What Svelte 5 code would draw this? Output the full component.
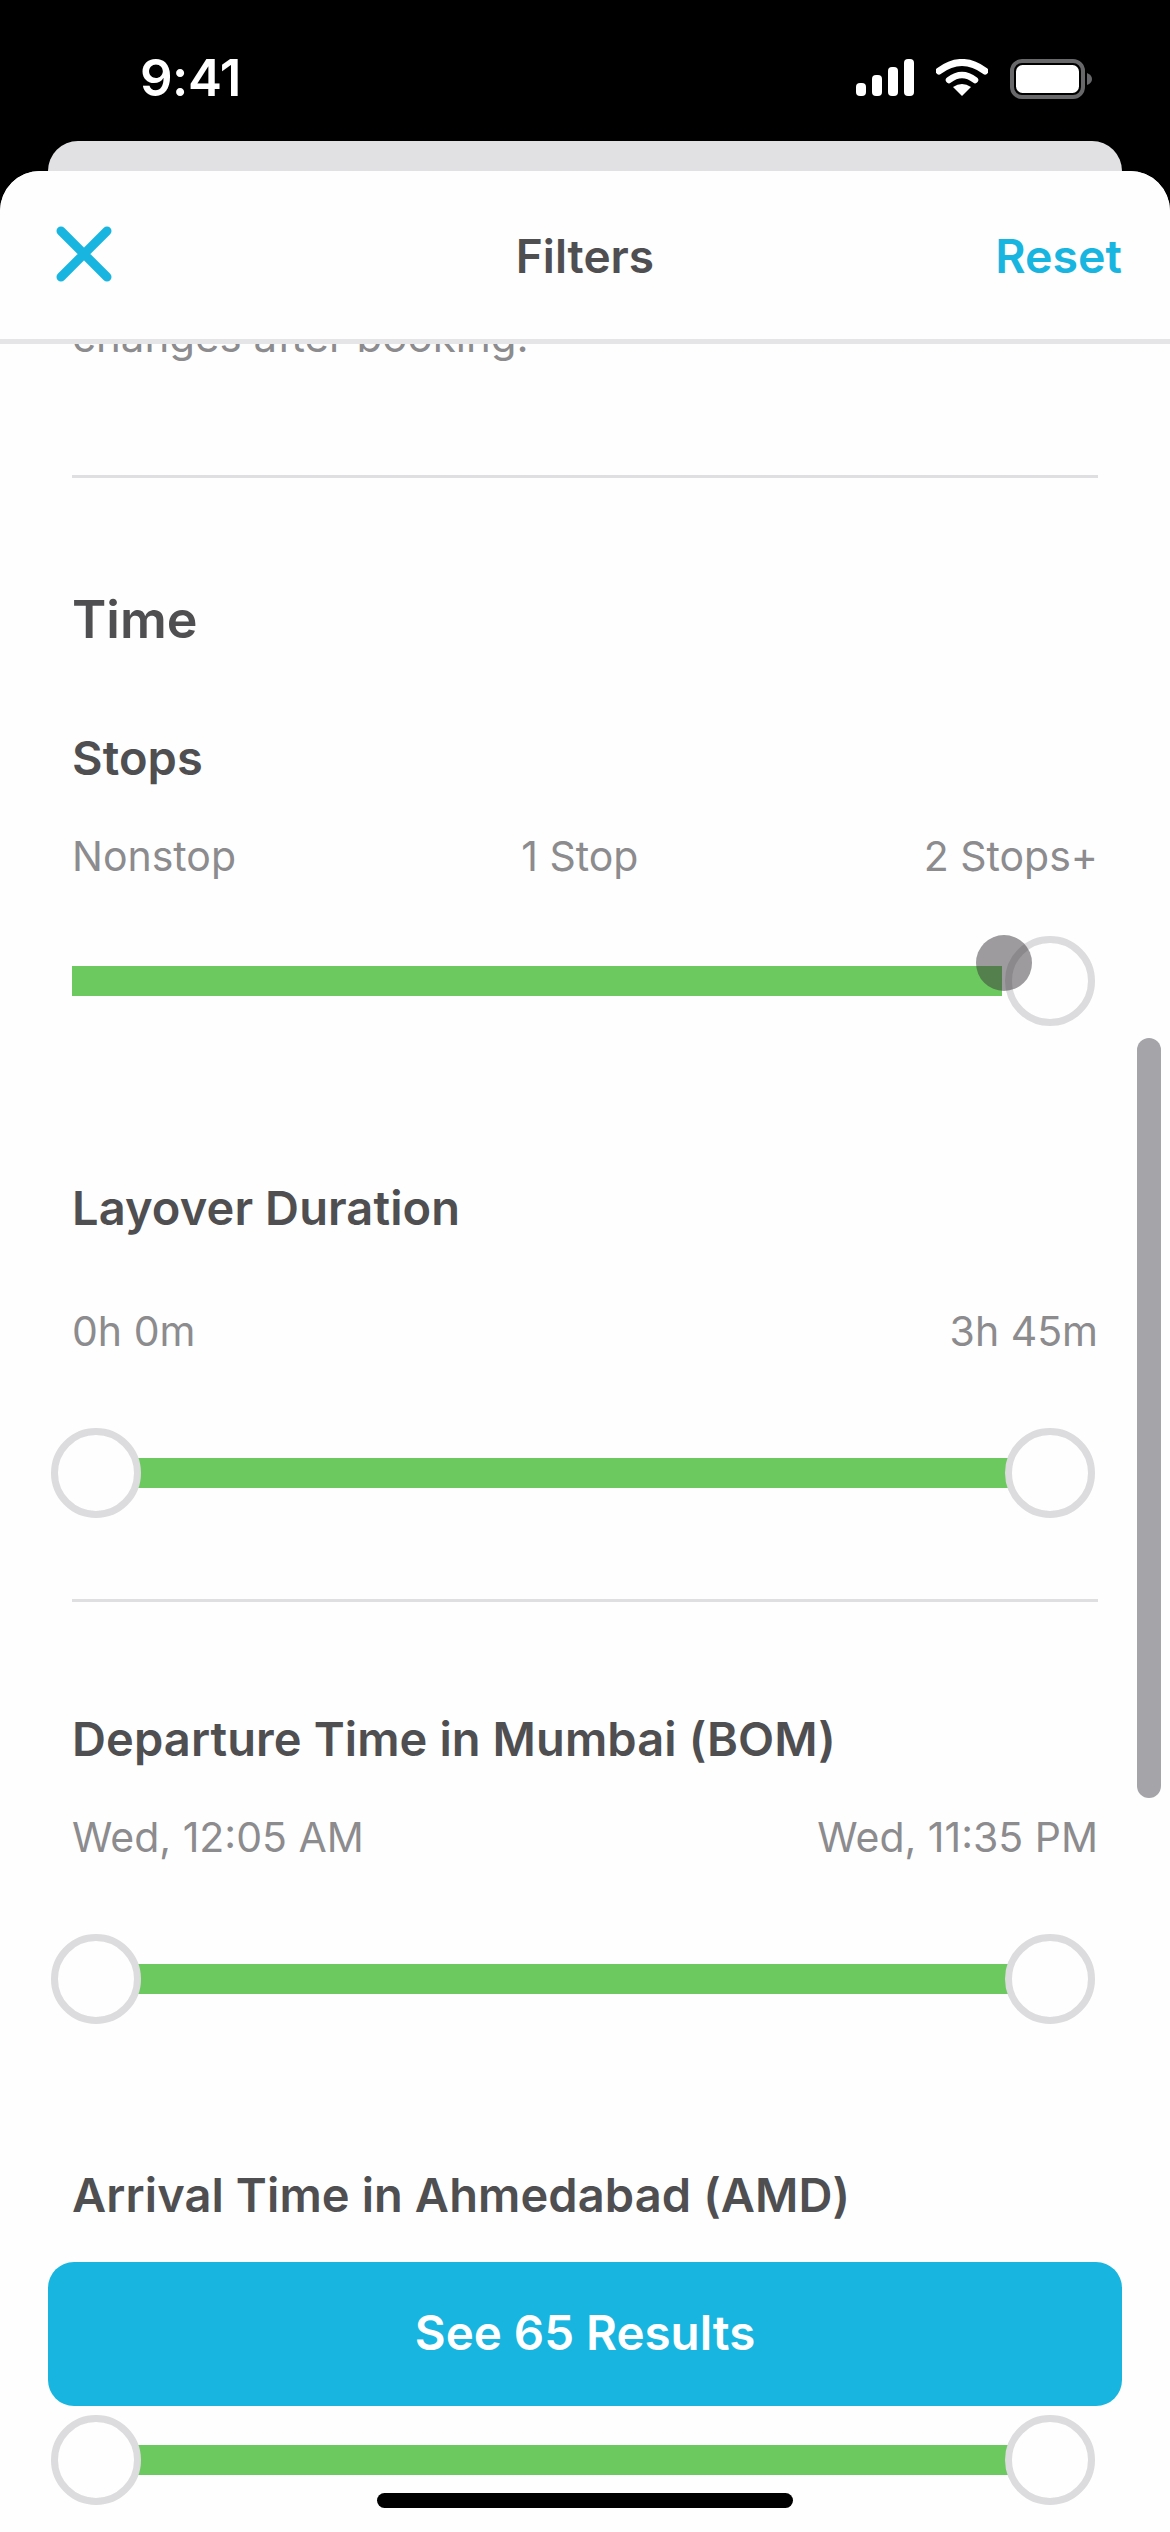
<script>
  const blue = "#17b5e0";
</script>

{#snippet slider(showLeft, touched)}
  <div class="slider">
    <div class="track" class:inset={showLeft}></div>
    {#if showLeft}
      <span class="knob left"></span>
    {/if}
    <span class="knob right"></span>
    {#if touched}
      <span class="touch"></span>
    {/if}
  </div>
{/snippet}

<div class="screen">
  <div class="statusbar">
    <span class="clock">9:41</span>
    <div class="status-icons">
      <svg width="58" height="37" viewBox="0 0 58 37" fill="#fff">
        <rect x="0" y="24" width="10" height="13" rx="4" />
        <rect x="16" y="16" width="10" height="21" rx="4" />
        <rect x="32" y="8" width="10" height="29" rx="4" />
        <rect x="48" y="0" width="10" height="37" rx="4" />
      </svg>
      <svg width="52" height="37" viewBox="0 0 52 37" fill="none">
        <path d="M3 12 Q26 -5 49 12" stroke="#fff" stroke-width="7" stroke-linecap="round" />
        <path d="M13 21 Q26 11 39 21" stroke="#fff" stroke-width="6.5" stroke-linecap="round" />
        <path d="M26 37 L17 28 Q26 22 35 28 Z" fill="#fff" />
      </svg>
      <svg width="83" height="40" viewBox="0 0 83 40" fill="none">
        <rect x="2" y="2" width="71" height="36" rx="10" stroke="#68686b" stroke-width="4" />
        <rect x="6" y="6" width="63" height="28" rx="6.5" fill="#fff" />
        <path d="M77 14 Q82 16 82 20 Q82 24 77 26 Z" fill="#68686b" />
      </svg>
    </div>
  </div>
  <div class="backsheet"></div>

  <div class="sheet">
    <header class="topbar">
      <svg class="close" width="56" height="56" viewBox="0 0 56 56" fill="none">
        <path d="M5 5 L51 51 M51 5 L5 51" stroke={blue} stroke-width="9" stroke-linecap="round" />
      </svg>
      <span class="title">Filters</span>
      <span class="reset">Reset</span>
    </header>

    <div class="content">
      <p class="intro">changes after booking.</p>
      <hr class="rule first" />

      <h2>Time</h2>
      <h3 class="stops">Stops</h3>
      <div class="labels l-stops">
        <span>Nonstop</span>
        <span>1 Stop</span>
        <span>2 Stops+</span>
      </div>
      <div class="s-stops">{@render slider(false, true)}</div>

      <h3 class="layover">Layover Duration</h3>
      <div class="labels l-layover">
        <span>0h 0m</span>
        <span>3h 45m</span>
      </div>
      <div class="s-layover">{@render slider(true, false)}</div>
      <hr class="rule second" />

      <h3 class="depart">Departure Time in Mumbai (BOM)</h3>
      <div class="labels l-depart">
        <span>Wed, 12:05 AM</span>
        <span>Wed, 11:35 PM</span>
      </div>
      <div class="s-depart">{@render slider(true, false)}</div>

      <h3 class="arrive">Arrival Time in Ahmedabad (AMD)</h3>
      <div class="s-arrive">{@render slider(true, false)}</div>
    </div>
  </div>

  <span class="scrollbar"></span>
  <button class="results">See 65 Results</button>
  <span class="home"></span>
</div>

<style>
  :global(body) {
    margin: 0;
    background: #000;
  }

  .screen {
    position: relative;
    width: 1170px;
    height: 2532px;
    overflow: hidden;
    background: #000;
    font-family: Inter, "Noto Sans", sans-serif;
  }

  .statusbar {
    display: flex;
    justify-content: space-between;
    align-items: flex-start;
    height: 141px;
    padding: 0 79px 0 140px;
    box-sizing: border-box;
    color: #fff;
  }

  .clock {
    margin-top: 48px;
    font-family: Inter, sans-serif;
    font-size: 51px;
    font-weight: 600;
    line-height: 60px;
    letter-spacing: -0.5px;
  }

  .status-icons {
    display: flex;
    align-items: flex-start;
    gap: 22px;
    margin-top: 59px;
    margin-right: -2px;
  }

  .backsheet {
    height: 40px;
    margin: 0 48px -10px;
    border-radius: 30px 30px 0 0;
    background: #e1e0e3;
  }

  .sheet {
    position: relative;
    height: 2361px;
    overflow: hidden;
    border-radius: 40px 40px 0 0;
    background: #fefefe;
  }

  .topbar {
    position: relative;
    z-index: 1;
    display: flex;
    justify-content: space-between;
    align-items: center;
    height: 173px;
    padding: 0 48px 3px 56px;
    box-sizing: border-box;
    border-bottom: 5px solid #e5e4e7;
    background: #fefefe;
  }

  .title {
    position: absolute;
    left: 0;
    right: 0;
    margin-top: 4px;
    text-align: center;
    font-size: 46px;
    font-weight: 600;
    color: #4f4e51;
  }

  .reset {
    margin-top: 4px;
    font-size: 46.5px;
    font-weight: 600;
    color: #17b5e0;
  }

  .content {
    padding: 0 72px;
  }

  .intro {
    margin: -37px 0 0;
    font-size: 42px;
    line-height: 60px;
    color: #8c8b8e;
  }

  .rule {
    height: 3px;
    margin: 0;
    border: 0;
    background: #dfdfe1;
  }

  .rule.first { margin-top: 108px; }
  .rule.second { margin-top: 81px; }

  h2 {
    margin: 112px 0 0;
    font-size: 52px;
    font-weight: 600;
    line-height: 60px;
    color: #4f4e51;
  }

  h3 {
    margin: 0;
    font-size: 47px;
    font-weight: 600;
    line-height: 50px;
    letter-spacing: 0.1px;
    color: #4f4e51;
  }

  h3.stops { margin-top: 83px; }
  h3.layover { margin-top: 157px; }
  h3.depart { margin-top: 112px; }
  h3.arrive { margin-top: 146px; }

  .labels {
    display: flex;
    justify-content: space-between;
    font-size: 41px;
    line-height: 50px;
    color: #8c8b8e;
  }

  .l-stops { margin-top: 48px; }
  .l-layover { margin-top: 73px; }
  .l-depart { margin-top: 48px; }

  .s-stops { margin-top: 55px; }
  .s-layover { margin-top: 72px; }
  .s-depart { margin-top: 72px; }
  .s-arrive { margin-top: 195px; }

  .slider {
    position: relative;
    display: flex;
    align-items: center;
    height: 90px;
  }

  .track {
    flex: 1;
    height: 30px;
    margin-right: 96px;
    background: #6cc95f;
  }

  .track.inset {
    margin-left: 24px;
    margin-right: 48px;
  }

  .knob {
    position: absolute;
    top: 0;
    width: 90px;
    height: 90px;
    box-sizing: border-box;
    border: 7px solid #dcdbdd;
    border-radius: 50%;
    background: #fefefe;
  }

  .knob.left { left: -21px; }
  .knob.right { right: 3px; }

  .touch {
    position: absolute;
    top: -1px;
    left: 904px;
    width: 56px;
    height: 56px;
    border-radius: 50%;
    background: rgba(60, 55, 60, 0.5);
  }

  .scrollbar {
    position: absolute;
    top: 1038px;
    left: 1137px;
    width: 24px;
    height: 760px;
    border-radius: 12px;
    background: #a5a4a8;
  }

  .results {
    position: absolute;
    left: 48px;
    top: 2262px;
    width: 1074px;
    height: 144px;
    padding: 0 0 4px;
    border: 0;
    border-radius: 26px;
    background: #17b5e0;
    color: #fff;
    font-family: inherit;
    font-size: 47.5px;
    font-weight: 600;
  }

  .home {
    position: absolute;
    left: 377px;
    top: 2493px;
    width: 416px;
    height: 15px;
    border-radius: 8px;
    background: #000;
  }
</style>
